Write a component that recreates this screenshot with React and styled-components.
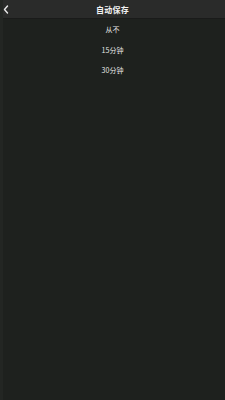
import React from "react";
import styled, { createGlobalStyle } from "styled-components";

const GlobalStyle = createGlobalStyle`
	html, body {
		margin: 0;
		padding: 0;
		background: #1e211e;
	}
	body {
		font-family: "Noto Sans CJK SC", "Liberation Sans", sans-serif;
	}
`;

const options = ["从不", "15分钟", "30分钟"];

const App = () => {
	return (
		<Page>
			<GlobalStyle />
			<Header>
				<Back>
					<svg width="6" height="9" viewBox="0 0 6 9">
						<path d="M4.5 1 L1.5 4.5 L4.5 8" stroke="#e8e8e8" strokeWidth="1.4" fill="none" strokeLinecap="round" strokeLinejoin="round" />
					</svg>
				</Back>
				<Title>自动保存</Title>
			</Header>
			<List>
				{options.map((o) => (
					<Item key={o}>{o}</Item>
				))}
			</List>
		</Page>
	);
};

export default App;

const Page = styled.div`
	width: 225px;
	height: 400px;
	background: #1e211e;
	display: flex;
	flex-direction: column;
	border-left: 3px solid #232623;
	box-sizing: border-box;
`;

const Header = styled.div`
	height: 18px;
	background: #2a2b2a;
	border-bottom: 1px solid #1a1b1a;
	display: flex;
	align-items: center;
	justify-content: center;
	position: relative;
`;

const Back = styled.div`
	position: absolute;
	left: 0;
	top: 5px;
	display: flex;
`;

const Title = styled.div`
	color: #f2f2f2;
	font-size: 8px;
	font-weight: bold;
	letter-spacing: 0.2px;
	margin-left: -3px;
`;

const List = styled.div`
	display: flex;
	flex-direction: column;
`;

const Item = styled.div`
	height: 20.5px;
	display: flex;
	align-items: center;
	justify-content: center;
	color: #e6e6e6;
	font-size: 7px;
	margin-left: -3px;
`;
